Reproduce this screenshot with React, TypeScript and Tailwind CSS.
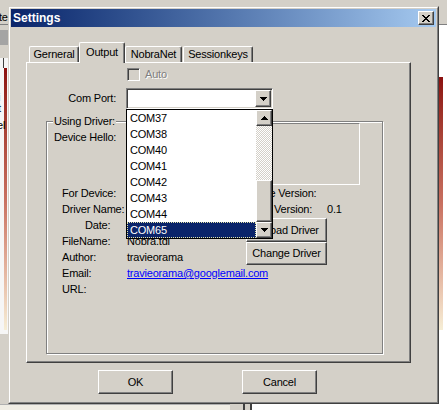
import React from 'react';

const raised =
  'border border-t-white border-l-white border-r-[#404040] border-b-[#404040] shadow-[inset_-1px_-1px_0_#808080] bg-[#d4d0c8]';
const sunken =
  'border border-t-[#808080] border-l-[#808080] border-r-white border-b-white shadow-[inset_1px_1px_0_#404040,inset_-1px_-1px_0_#d4d0c8]';

const Arrow = ({ up }: { up?: boolean }) => (
  <svg width="7" height="4" viewBox="0 0 7 4" shapeRendering="crispEdges">
    <path
      d={
        up
          ? 'M3 0h1v1H3z M2 1h3v1H2z M1 2h5v1H1z M0 3h7v1H0z'
          : 'M0 0h7v1H0z M1 1h5v1H1z M2 2h3v1H2z M3 3h1v1H3z'
      }
      fill="#000"
    />
  </svg>
);

const ports = ['COM37', 'COM38', 'COM40', 'COM41', 'COM42', 'COM43', 'COM44', 'COM65'];

const Tab = ({ label, w, active }: { label: string; w: string; active?: boolean }) => (
  <div
    className={
      active
        ? `${w} h-[21px] -mb-[1px] relative z-10 pb-[2px] bg-[#d4d0c8] border-t border-l border-white border-r border-r-[#404040] shadow-[inset_-1px_0_0_#808080] rounded-t-[2px] flex items-center justify-center`
        : `${w} h-[16px] border-t border-l border-white border-r border-r-[#404040] shadow-[inset_-1px_0_0_#808080] rounded-t-[2px] flex items-center justify-center`
    }
  >
    {label}
  </div>
);

export default function App() {
  return (
    <div className="relative w-[447px] h-[410px] overflow-hidden bg-white font-['Liberation_Sans',Arial,sans-serif] text-[11px] leading-[13px] tracking-[-0.2px] text-black">
      {/* desktop behind the dialog */}
      <div className="absolute left-0 top-0 w-full h-[25px] bg-[#d4d0c8] border-b border-[#808080]" />
      <div className="absolute left-0 top-[25px] w-[8px] h-[379px] bg-[#d4d0c8]" />
      <span className="absolute left-[-1px] top-[11px]">te</span>
      <div className="absolute left-0 top-[30px] w-[8px] h-[15px] bg-[#a4a4a4]" />
      <div className="absolute left-0 top-[58px] w-[8px] h-[276px] bg-[#f6f6f6]" />
      <div className="absolute left-[3px] top-[58px] w-[1px] h-[10px] bg-[#404040]" />
      <div className="absolute left-[4px] top-[68px] w-[3px] h-[262px] bg-linear-to-b from-[#8c1010] via-[#c87060] to-[#f6eed6]" />
      <span className="absolute left-[-2px] top-[91px]">i</span>
      <span className="absolute left-[-2px] top-[102px]">t</span>
      <span className="absolute left-[-3px] top-[119px]">el</span>
      <div className="absolute left-[439px] top-[77px] w-[4px] h-[253px] bg-linear-to-b from-[#8c1010] via-[#c87060] to-[#f6eed6]" />
      <div className="absolute left-0 top-[404px] w-[230px] h-[6px] bg-[#f0ede4] border-t border-[#b0b0b0]" />
      <div className="absolute left-[230px] top-[404px] w-[22px] h-[6px] bg-[#d4d0c8] flex">
        <div className="ml-[13px] w-[2px] h-full bg-[#404040]" />
        <div className="ml-[5px] w-[2px] h-full bg-[#404040]" />
      </div>

      {/* Settings dialog */}
      <div className="absolute left-[8px] top-[6px] w-[431px] h-[398px] bg-[#d4d0c8] border border-t-[#d4d0c8] border-l-[#d4d0c8] border-r-[#404040] border-b-[#404040]">
        <div className="h-full border border-t-white border-l-white border-r-[#808080] border-b-[#808080] p-[1px] flex flex-col">
          <div className="h-[18px] flex items-center justify-between px-[2px] bg-linear-to-r from-[#0a246a] to-[#a6caf0]">
            <span className="text-white font-bold text-[12px] tracking-normal">Settings</span>
            <div className={`${raised} w-[16px] h-[14px] flex items-center justify-center`}>
              <svg width="8" height="7" viewBox="0 0 8 7" shapeRendering="crispEdges">
                <path
                  d="M0 0h2v1H0z M6 0h2v1H6z M1 1h2v1H1z M5 1h2v1H5z M2 2h4v1H2z M3 3h2v1H3z M2 4h4v1H2z M1 5h2v1H1z M5 5h2v1H5z M0 6h2v1H0z M6 6h2v1H6z"
                  fill="#000"
                />
              </svg>
            </div>
          </div>

          <div className="ml-[15px] mt-[15px] w-[385px]">
            <div className="h-[20px] flex items-end">
              <div className="ml-[3px]" />
              <Tab label="Gerneral" w="w-[50px]" />
              <Tab label="Output" w="w-[46px]" active />
              <Tab label="NobraNet" w="w-[57px]" />
              <div className="ml-[1px]" />
              <Tab label="Sessionkeys" w="w-[70px]" />
            </div>

            <div className="w-[385px] h-[301px] border border-t-white border-l-white border-r-[#404040] border-b-[#404040] shadow-[inset_-1px_-1px_0_#808080] flex flex-col">
              <div className="mt-[5px] ml-[100px] h-[13px] flex items-center">
                <div className={`${sunken} w-[13px] h-[13px] bg-[#d4d0c8]`} />
                <span className="ml-[5px] text-[#808080] [text-shadow:1px_1px_0_#ffffff]">Auto</span>
              </div>

              <div className="mt-[7px] h-[21px] flex items-center">
                <div className="w-[89px] text-right">Com Port:</div>
                <div className={`${sunken} relative ml-[10px] w-[147px] h-[21px] bg-white p-[1px] flex justify-end`}>
                  <div className={`${raised} w-[16px] h-[17px] flex items-center justify-center`}>
                    <Arrow />
                  </div>

                  {/* open drop-down list */}
                  <div className="absolute left-[-1px] top-[20px] z-20 w-[147px] h-[130px] border border-black bg-white flex">
                    <div className="flex-1 flex flex-col">
                      {ports.map((p, i) =>
                        i === ports.length - 1 ? (
                          <div
                            key={p}
                            className="h-[16px] leading-[14px] pl-[2px] bg-[#0a246a] text-white border border-dotted border-[#e4e4a8]"
                          >
                            {p}
                          </div>
                        ) : (
                          <div key={p} className="h-[16px] leading-[16px] pl-[3px]">
                            {p}
                          </div>
                        )
                      )}
                    </div>
                    <div className="w-[16px] flex flex-col">
                      <div className={`${raised} h-[16px] flex items-center justify-center`}>
                        <Arrow up />
                      </div>
                      <div className="h-[54px] bg-[repeating-conic-gradient(#d4d0c8_0_25%,#ffffff_0_50%)] bg-[length:2px_2px]" />
                      <div className={`${raised} h-[42px]`} />
                      <div className={`${raised} h-[16px] flex items-center justify-center`}>
                        <Arrow />
                      </div>
                    </div>
                  </div>
                </div>
              </div>

              <div className="relative mt-[12px] ml-[19px] w-[337px] h-[233px] border border-[#808080] shadow-[inset_1px_1px_0_#ffffff,1px_1px_0_#ffffff]">
                <span className="absolute left-[6px] -top-[7px] px-[1px] bg-[#d4d0c8]">Using Driver:</span>

                <div className="pt-[1px] flex">
                  <div className="w-[79px] pl-[7px] pt-[8px]">Device Hello:</div>
                  <div className="w-[234px] h-[62px] border border-t-[#808080] border-l-[#808080] border-r-white border-b-white" />
                </div>

                <div className="grid grid-cols-[80px_116px_139px] auto-rows-[16px] leading-[16px]">
                  <div className="pl-[15px]">For Device:</div>
                  <div />
                  <div>Device Version:</div>

                  <div className="pl-[15px]">Driver Name:</div>
                  <div />
                  <div className="flex">
                    <span className="w-[84px]">Driver Version:</span>
                    <span>0.1</span>
                  </div>

                  <div className="pl-[38px]">Date:</div>
                  <div />
                  <div className="row-span-3 pl-[3px] pt-[1px] flex flex-col">
                    <div className={`${raised} w-[81px] h-[24px] flex items-center justify-center`}>Upload Driver</div>
                    <div className={`${raised} w-[81px] h-[24px] flex items-center justify-center`}>Change Driver</div>
                  </div>

                  <div className="pl-[15px]">FileName:</div>
                  <div>Nobra.tdl</div>

                  <div className="pl-[15px]">Author:</div>
                  <div>travieorama</div>

                  <div className="pl-[15px]">Email:</div>
                  <div className="col-span-2 text-[#0000ff] underline">travieorama@googlemail.com</div>

                  <div className="pl-[15px]">URL:</div>
                </div>
              </div>
            </div>
          </div>

          <div className="mt-[7px] ml-[87px] flex">
            <div className={`${raised} w-[75px] h-[24px] flex items-center justify-center`}>OK</div>
            <div className={`${raised} ml-[69px] w-[75px] h-[24px] flex items-center justify-center`}>Cancel</div>
          </div>
        </div>
      </div>
    </div>
  );
}
